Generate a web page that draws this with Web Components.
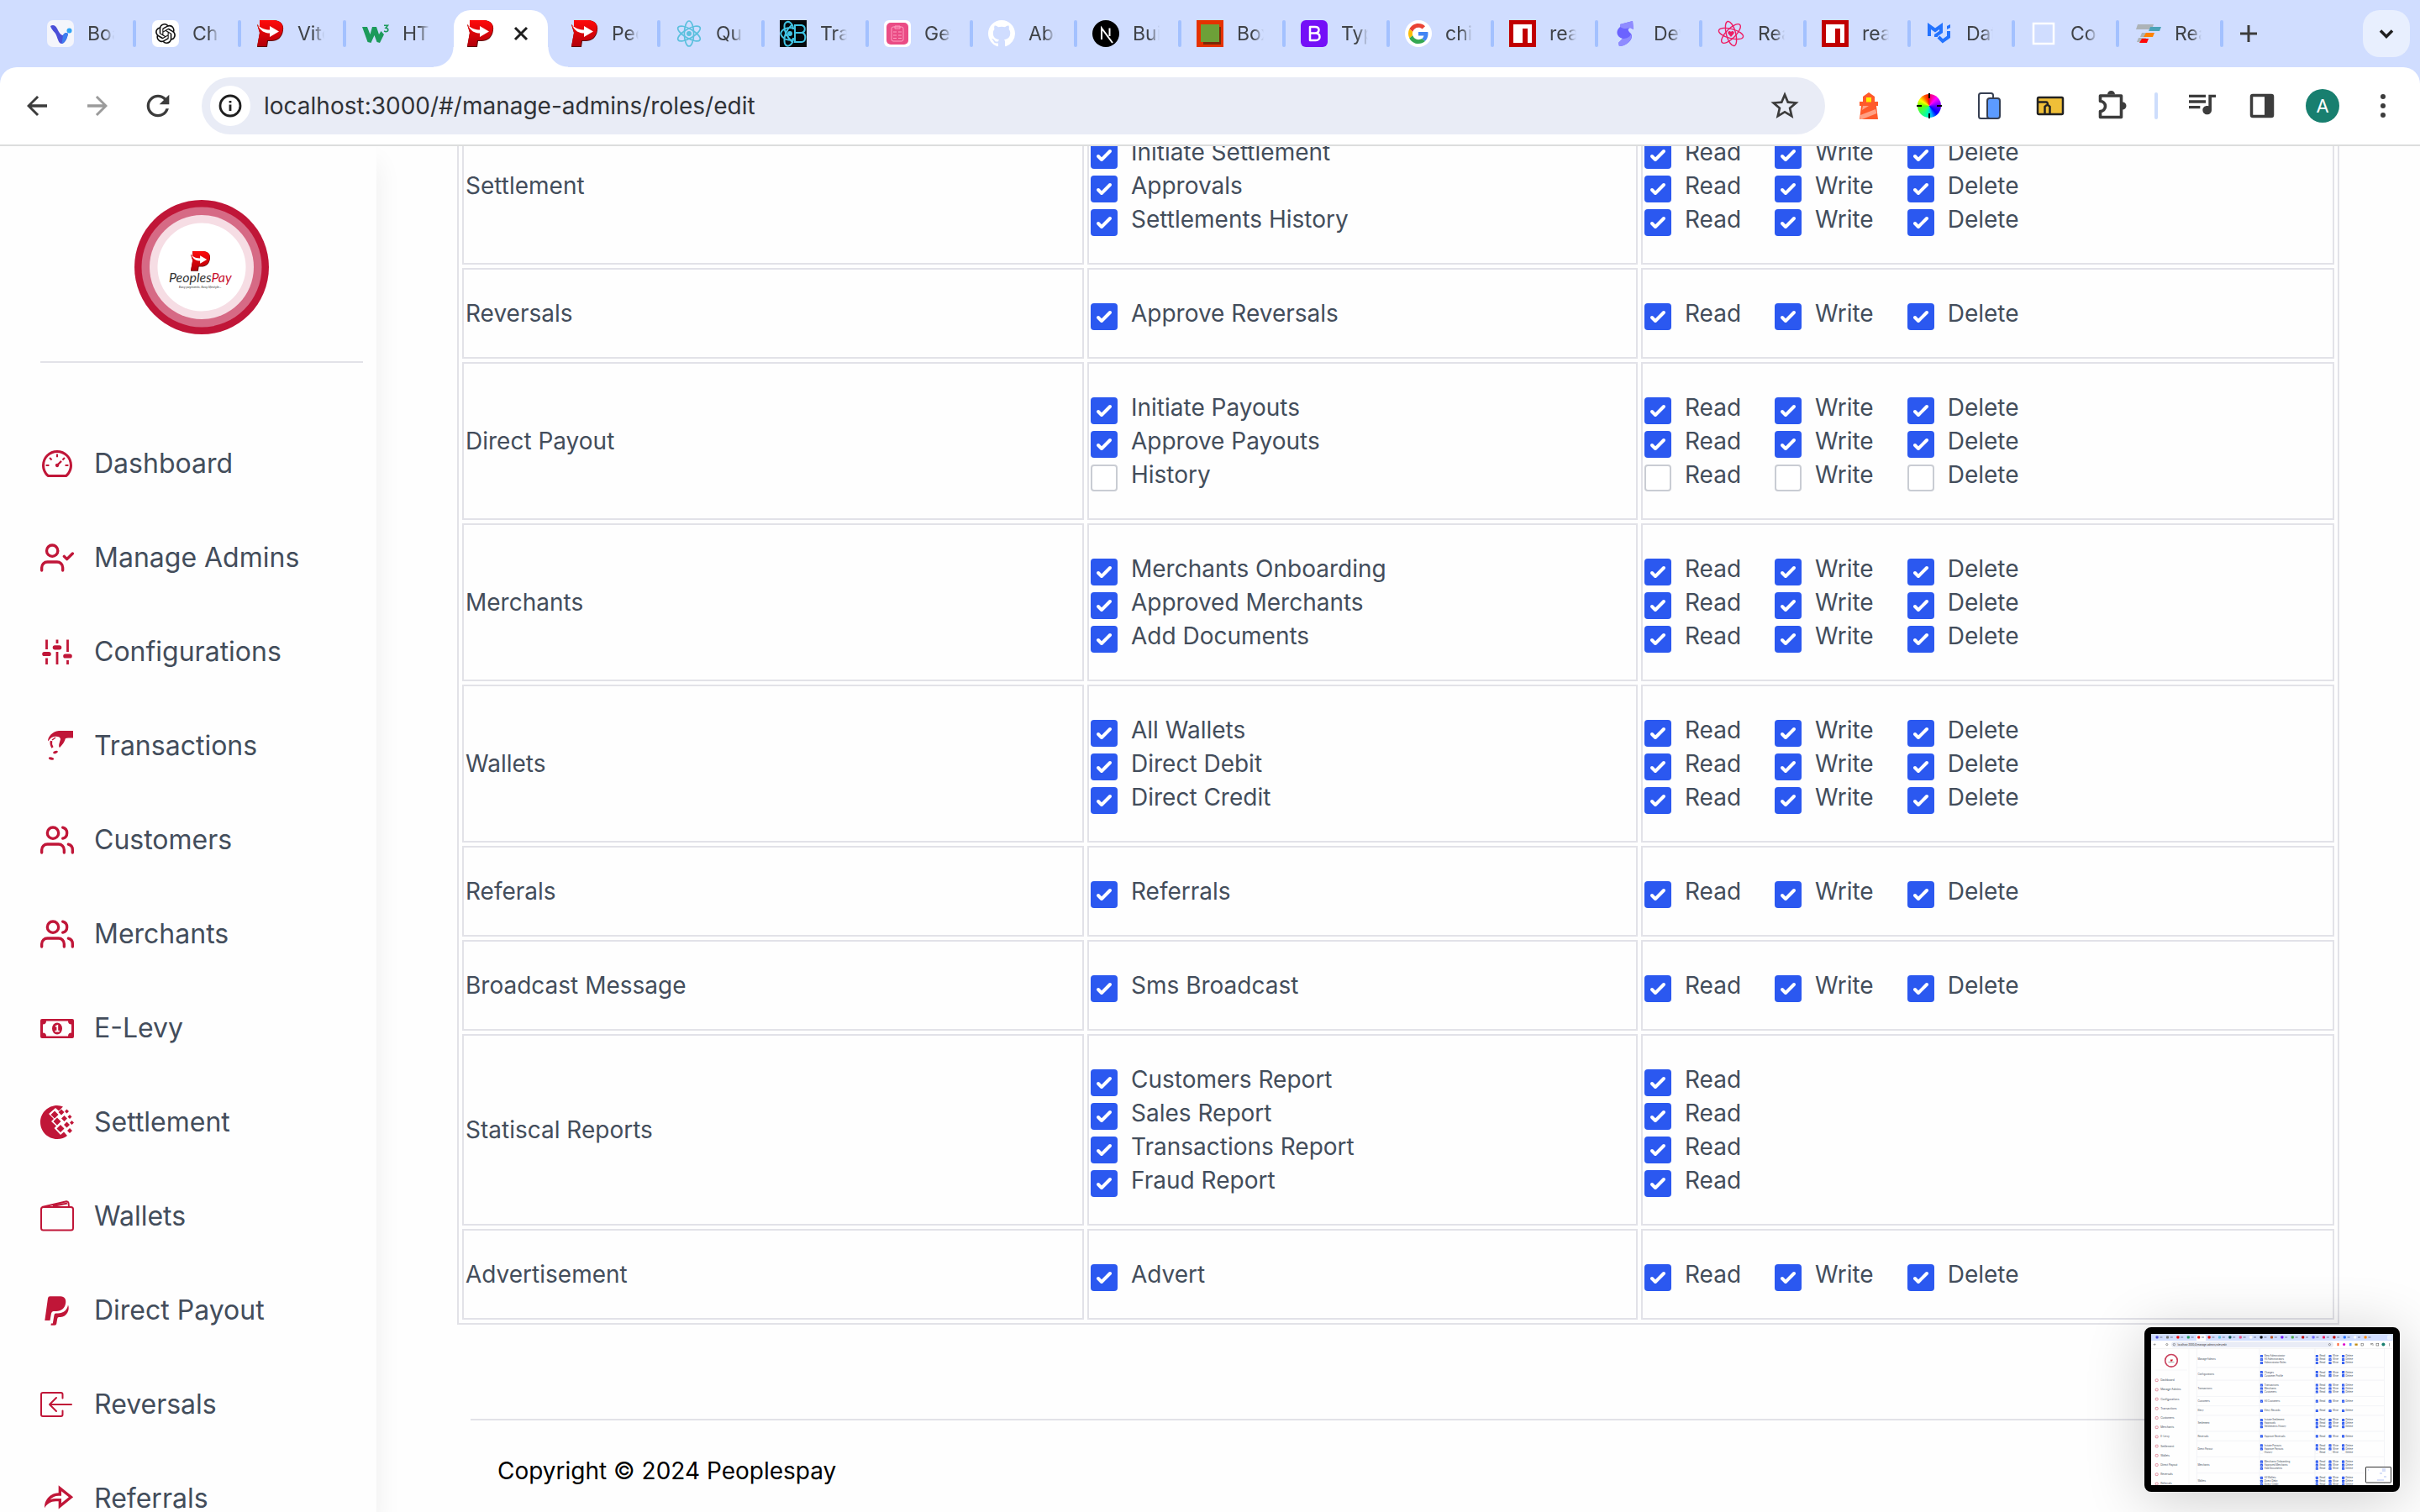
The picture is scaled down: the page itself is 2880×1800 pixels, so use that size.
<!DOCTYPE html>
<html lang="en">
<head>
<meta charset="utf-8">
<title>PeoplesPay Admin</title>
<style>
  html, body { margin: 0; height: 100%; }
  body { font-family: Inter, "Liberation Sans", sans-serif; font-size: 28px; line-height: 40px; color: #434d5b; background: #fefefe; overflow: hidden; }
</style>
</head>
<body>
<browser-window>
  <tab-strip slot="tabs">
    <browser-tab wide icon="vee">Board</browser-tab>
    <browser-tab wide icon="gpt">Chat</browser-tab>
    <browser-tab wide icon="pp">Vite</browser-tab>
    <browser-tab wide last icon="w3">HTML</browser-tab>
    <active-tab></active-tab>
    <browser-tab icon="pp">Peop</browser-tab>
    <browser-tab icon="react">Quick</browser-tab>
    <browser-tab icon="rbs">Trans</browser-tab>
    <browser-tab icon="clip">Getti</browser-tab>
    <browser-tab icon="github">Abou</browser-tab>
    <browser-tab icon="next">Build</browser-tab>
    <browser-tab icon="box">Box</browser-tab>
    <browser-tab icon="boot">Typo</browser-tab>
    <browser-tab icon="google">chip</browser-tab>
    <browser-tab icon="npm">react</browser-tab>
    <browser-tab icon="stripe">Dev</browser-tab>
    <browser-tab icon="rquery">React</browser-tab>
    <browser-tab icon="npm">react</browser-tab>
    <browser-tab icon="mui">Data</browser-tab>
    <browser-tab icon="blank">Code</browser-tab>
    <browser-tab icon="router">React</browser-tab>
  </tab-strip>
  <browser-toolbar slot="toolbar" url="localhost:3000/#/manage-admins/roles/edit"></browser-toolbar>
  <app-sidebar>
    <nav-item icon="dashboard">Dashboard</nav-item>
    <nav-item icon="usercheck">Manage Admins</nav-item>
    <nav-item icon="sliders">Configurations</nav-item>
    <nav-item icon="hand">Transactions</nav-item>
    <nav-item icon="users">Customers</nav-item>
    <nav-item icon="users">Merchants</nav-item>
    <nav-item icon="bill">E-Levy</nav-item>
    <nav-item icon="webmoney">Settlement</nav-item>
    <nav-item icon="wallet">Wallets</nav-item>
    <nav-item icon="paypal">Direct Payout</nav-item>
    <nav-item icon="reverse">Reversals</nav-item>
    <nav-item icon="share">Referrals</nav-item>
  </app-sidebar>
  <app-main>
    <permission-table></permission-table>
    <app-footer>Copyright © 2024 Peoplespay</app-footer>
  </app-main>
  <screen-preview slot="overlay"></screen-preview>
</browser-window>

<script>
const define = (name, build) => customElements.define(name, class extends HTMLElement {
  connectedCallback() {
    if (this.shadowRoot) return;
    this.attachShadow({ mode: 'open' }).innerHTML = build(this);
  }
});

const P = `<path d="M3 0H19C28 0 32 5 31 12C30 21 24 25 17 25H13L12 32H0L3 15L0 5L3 8Z" fill="#5a0a0a"/><path d="M3 0H19C28 0 31.500 5 30.500 11C29.500 20 24 24 17 24H12L11 31H0L3 15L0 5L3 8Z" fill="url(#pg)"/><path d="M1 6C5 10 10 11.500 15 11.500V7L26 13.500L15 20V15.500C9 15.500 4 13 1 6Z" fill="#fff"/><defs><linearGradient id="pg" x2="0" y2="1"><stop stop-color="#ff0a0a"/><stop offset="1" stop-color="#b3000a"/></linearGradient></defs>`;
const orbit = (c, w, mid) => `<g fill="none" stroke="${c}" stroke-width="${w}"><ellipse cx="16" cy="16" rx="15" ry="5.600"/><ellipse cx="16" cy="16" rx="15" ry="5.600" transform="rotate(60 16 16)"/><ellipse cx="16" cy="16" rx="15" ry="5.600" transform="rotate(120 16 16)"/></g>${mid}`;
const users = `<g fill="none" stroke="currentColor" stroke-width="2" stroke-linecap="round" stroke-linejoin="round">`;

/* Every icon: [viewBox, markup] */
const ICONS = {
  vee: ['0 0 32 32', `<rect width="32" height="32" rx="7" fill="#f4f5fb"/><path d="M4 7C7 5 10 6 12 10C14 14 16 18 19 18C20 16 22 14 25 16C24 22 21 28 17.500 28C14 28 13 23 11 18C9 13 6 13 4 7Z" fill="#4b4fd8"/><path d="M19 18C20 15 23 14 25 16C24 22 21 27 17.500 28Z" fill="#3d7ef0"/><circle cx="26.500" cy="12.500" r="3" fill="#2fa4f5"/>`],
  gpt: ['0 0 32 32', `<rect width="32" height="32" rx="7" fill="#fff"/><path transform="translate(4 4)" fill="#111" d="M22.2819 9.8211a5.9847 5.9847 0 0 0-.5157-4.9108 6.0462 6.0462 0 0 0-6.5098-2.9A6.0651 6.0651 0 0 0 4.9807 4.1818a5.9847 5.9847 0 0 0-3.9977 2.9 6.0462 6.0462 0 0 0 .7427 7.0966 5.98 5.98 0 0 0 .511 4.9107 6.051 6.051 0 0 0 6.5146 2.9001A5.9847 5.9847 0 0 0 13.2599 24a6.0557 6.0557 0 0 0 5.7718-4.2058 5.9894 5.9894 0 0 0 3.9977-2.9001 6.0557 6.0557 0 0 0-.7475-7.0729zm-9.022 12.6081a4.4755 4.4755 0 0 1-2.8764-1.0408l.1419-.0804 4.7783-2.7582a.7948.7948 0 0 0 .3927-.6813v-6.7369l2.02 1.1686a.071.071 0 0 1 .038.052v5.5826a4.504 4.504 0 0 1-4.4945 4.4944zm-9.6607-4.1254a4.4708 4.4708 0 0 1-.5346-3.0137l.142.0852 4.783 2.7582a.7712.7712 0 0 0 .7806 0l5.8428-3.3685v2.3324a.0804.0804 0 0 1-.0332.0615L9.74 19.9502a4.4992 4.4992 0 0 1-6.1408-1.6464zM2.3408 7.8956a4.485 4.485 0 0 1 2.3655-1.9728V11.6a.7664.7664 0 0 0 .3879.6765l5.8144 3.3543-2.0201 1.1685a.0757.0757 0 0 1-.071 0l-4.8303-2.7865A4.504 4.504 0 0 1 2.3408 7.872zm16.5963 3.8558L13.1038 8.364 15.1192 7.2a.0757.0757 0 0 1 .071 0l4.8303 2.7913a4.4944 4.4944 0 0 1-.6765 8.1042v-5.6772a.79.79 0 0 0-.407-.667zm2.0107-3.0231l-.142-.0852-4.7735-2.7818a.7759.7759 0 0 0-.7854 0L9.409 9.2297V6.8974a.0662.0662 0 0 1 .0284-.0615l4.8303-2.7866a4.4992 4.4992 0 0 1 6.6802 4.66zM8.3065 12.863l-2.02-1.1638a.0804.0804 0 0 1-.038-.0567V6.0742a4.4992 4.4992 0 0 1 7.3757-3.4537l-.142.0805L8.704 5.459a.7948.7948 0 0 0-.3927.6813zm1.0976-2.3654l2.602-1.4998 2.6069 1.4998v2.9994l-2.5974 1.4997-2.6067-1.4997Z"/>`],
  pp: ['0 0 32 32', P],
  w3: ['0 0 32 32', `<path d="M0 8H6L9.500 17L12 8H17L20 17L22.500 13L26 17L21 27L17.500 26L14.500 18L10.500 27L6.500 26Z" fill="#1c9a5b"/><path d="M26 6.200H30.500L28 9.200C32 9.500 31.500 14 28 13.800L26 13" fill="none" stroke="#1c9a5b" stroke-width="1.600"/>`],
  react: ['0 0 32 32', orbit('#5cc0de', 1.7, '<circle cx="16" cy="16" r="3" fill="#5cc0de"/>').replace('<g ', '<g transform="rotate(90 16 16)" ')],
  rbs: ['0 0 32 32', `<rect width="32" height="32" fill="#04090c"/><g fill="none" stroke="#41c4e4" stroke-width="2"><path d="M18 6H26C31 7 31 14 26 15H18ZM18 15H27C32 17 31 26 26 26H18Z"/><path d="M1 16C3 9 12 8 17 10M1 16C3 23 12 25 17 23M6 4C10 -1 16 4 16 11M6 28C9 34 16 29 16 21M6 4C4 11 8 20 16 27M6 28C4 20 8 11 14 6"/></g><circle cx="12" cy="16" r="3" fill="#41c4e4"/>`],
  clip: ['0 0 32 32', `<rect width="32" height="32" rx="6" fill="#fff"/><rect x="3" y="3" width="26" height="26" rx="5" fill="#ea4c85"/><g fill="none" stroke="#ff9dc0" stroke-width="1"><rect x="9" y="8" width="14" height="17" rx="2"/><path d="M13 7H19V10H13ZM11 14H15M17 14H21M11 18H15M17 18H21M11 21.500H15M17 21.500H21"/></g>`],
  github: ['0 0 16 16', `<path fill="#fff" d="M8 0C3.580 0 0 3.580 0 8c0 3.540 2.290 6.530 5.470 7.590.4.070.55-.17.55-.38 0-.19-.01-.82-.01-1.490-2.010.37-2.530-.49-2.690-.94-.09-.23-.48-.94-.82-1.130-.28-.15-.68-.52-.01-.53.63-.01 1.080.58 1.230.82.72 1.210 1.870.87 2.330.66.07-.52.28-.87.51-1.070-1.780-.2-3.640-.89-3.640-3.950 0-.87.31-1.590.82-2.150-.08-.2-.36-1.020.08-2.120 0 0 .67-.21 2.200.82.64-.18 1.320-.27 2-.27s1.360.09 2 .27c1.530-1.040 2.200-.82 2.200-.82.44 1.100.16 1.920.08 2.120.51.56.82 1.270.82 2.150 0 3.070-1.870 3.750-3.650 3.950.29.25.54.73.54 1.480 0 1.070-.01 1.930-.01 2.200 0 .21.15.46.55.38A8.010 8.010 0 0 0 16 8c0-4.420-3.580-8-8-8z"/>`],
  next: ['0 0 32 32', `<circle cx="16" cy="16" r="16" fill="#000"/><path d="M11 23V9.500L24 27M20.500 9.500V19" fill="none" stroke="#fff" stroke-width="2"/>`],
  box: ['0 0 32 32', `<rect width="32" height="32" fill="#e53200"/><path d="M8 8H29V29H8Z" fill="#7a2a08"/><rect x="5" y="5" width="22" height="21" fill="#6da038"/>`],
  boot: ['0 0 32 32', `<rect width="32" height="32" rx="6" fill="#7410f7"/><path d="M11 8H17C23 8 23 15 17 15.500H11ZM11 15.500H18C24 16 24 24 18 24H11Z" fill="none" stroke="#fff" stroke-width="2.500" stroke-linejoin="round"/>`],
  google: ['-8 -8 64 64', `<circle cx="24" cy="24" r="32" fill="#fff"/><path fill="#EA4335" d="M24 9.500c3.540 0 6.710 1.220 9.210 3.600l6.850-6.850C35.900 2.380 30.470 0 24 0 14.620 0 6.510 5.380 2.560 13.220l7.980 6.190C12.430 13.720 17.740 9.500 24 9.500z"/><path fill="#4285F4" d="M46.980 24.550c0-1.570-.15-3.090-.38-4.550H24v9.020h12.940c-.58 2.960-2.260 5.480-4.780 7.180l7.730 6c4.510-4.180 7.090-10.360 7.090-17.650z"/><path fill="#FBBC05" d="M10.530 28.590c-.48-1.450-.76-2.990-.76-4.590s.27-3.140.76-4.590l-7.980-6.190C.92 16.460 0 20.120 0 24c0 3.880.92 7.540 2.560 10.780l7.970-6.190z"/><path fill="#34A853" d="M24 48c6.480 0 11.930-2.130 15.890-5.810l-7.730-6c-2.150 1.450-4.920 2.300-8.160 2.300-6.260 0-11.570-4.220-13.470-9.910l-7.980 6.190C6.510 42.620 14.620 48 24 48z"/>`],
  npm: ['0 0 32 32', `<rect width="32" height="32" fill="#c10000"/><path d="M5 5H27V27H22V10H16V27H5Z" fill="#fff"/>`],
  stripe: ['0 0 32 32', `<path d="M8 5L23 1L24 11L20 9C16 11 18 13 21 16C25 22 16 31 7 31L6 27L11 22C4 20 2 13 8 8Z" fill="#6c63ff"/><path d="M8 5L23 1L24 11L20 9C15 11 11 10 8 8ZM6 27L11 22C15 22 19 21 21 17C24 23 15 31 7 31Z" fill="#8f8bff"/>`],
  rquery: ['0 0 32 32', orbit('#ee1d63', 1.4, '<path d="M16 20L12.500 16A2 2 0 0 1 16 14A2 2 0 0 1 19.500 16Z" fill="#ee1d63"/>').replace('<g ', '<g transform="rotate(15 16 16)" ')],
  mui: ['0 0 32 32', `<path d="M4 19V7L11 12L18 7V14L12 18V20" fill="none" stroke="#2373ff" stroke-width="4"/><path d="M15 20L20 25L27 20V13" fill="none" stroke="#2373ff" stroke-width="4"/><path d="M25 7L29 5V9L25 11Z" fill="#2373ff"/>`],
  blank: ['0 0 32 32', `<rect x="4" y="4" width="24" height="24" fill="none" stroke="#fff" stroke-width="2.500"/>`],
  router: ['0 0 32 32', `<path d="M4 5H23L21 11H2Z" fill="#adb3b7"/><path d="M19 8H32L30 13H17Z" fill="#4ba3b8"/><path d="M9 15H17L15 20H7Z" fill="#adb3b7"/><path d="M14 15H24L22 20H11Z" fill="#ff8200"/><path d="M5 21H14L12 26H3Z" fill="#adb3b7"/><path d="M9 22H17L15 27H6Z" fill="#ff0808"/>`],
  close: ['0 0 32 32', `<path d="M9 9L23 23M23 9L9 23" stroke="#1f1f1f" stroke-width="3"/>`],
  plus: ['0 0 20 20', `<path d="M10 0V20M0 10H20" stroke="#3c3c3c" stroke-width="3"/>`],
  chevron: ['0 0 24 24', `<path d="M5 8.500L12 15.500L19 8.500" fill="none" stroke="#1f1f1f" stroke-width="3.500"/>`],
  back: ['0 0 24 24', `<path fill="#3c3c3c" d="M20 10.800H7.830l5.590-5.390L12 4l-8 8 8 8 1.410-1.410L7.830 13.200H20z"/>`],
  forward: ['0 0 24 24', `<path fill="#9b9b9b" d="M4 10.800H16.170l-5.590-5.390L12 4l8 8-8 8-1.410-1.410L16.170 13.200H4z"/>`],
  reload: ['0 0 24 24', `<path fill="#3c3c3c" d="M17.650 6.350A7.958 7.958 0 0 0 12 4c-4.420 0-7.990 3.580-7.990 8s3.570 8 7.990 8c3.730 0 6.840-2.550 7.730-6h-2.080A5.990 5.990 0 0 1 12 18c-3.310 0-6-2.690-6-6s2.690-6 6-6c1.660 0 3.140.69 4.220 1.780L13 11h7V4l-2.350 2.350z"/>`],
  info: ['0 0 28 28', `<circle cx="14" cy="14" r="12" fill="none" stroke="#1f1f1f" stroke-width="2.800"/><path d="M14 12.500V20M14 8V10.500" stroke="#1f1f1f" stroke-width="2.800"/>`],
  star: ['0 0 24 24', `<path fill="#3c3c3c" d="M22 9.240l-7.190-.62L12 2 9.190 8.630 2 9.240l5.460 4.730L5.820 21 12 17.270 18.180 21l-1.630-7.030L22 9.240zM12 15.400l-3.760 2.270 1-4.280-3.320-2.880 4.380-.38L12 6.100l1.710 4.040 4.380.38-3.320 2.880 1 4.280L12 15.400z"/>`],
  lighthouse: ['0 0 40 40', `<path d="M20 4L27 9V15H31V20H29L31 36H9L11 20H9V15H13V9Z" fill="#ff5a2b"/><rect x="17" y="10" width="6" height="5.500" fill="#fff000"/><path d="M13 20H20L12 25ZM10 31L28 24L29.500 29L12 36H9.500Z" fill="#ffa184"/>`],
  devices: ['0 0 40 40', `<rect x="7" y="5" width="17" height="30" rx="2.500" fill="#fff" stroke="#363f52" stroke-width="2"/><rect x="17" y="11" width="15" height="24" rx="3" fill="#5c9bff" stroke="#363f52" stroke-width="2"/>`],
  folder: ['0 0 40 40', `<rect x="5" y="10" width="30" height="20" rx="1.500" fill="#f0bf38" stroke="#222" stroke-width="2.500"/><path d="M6 15.500H15Q17 15.500 17 19M13.500 30V21Q16.500 17 19.500 21V30" fill="none" stroke="#222" stroke-width="2.500"/>`],
  puzzle: ['0 0 40 40', `<path d="M16 6.500a4.500 4.500 0 0 1 9 0zM34 15.500a4.500 4.500 0 0 1 0 9z" fill="#3c3c3c"/><path d="M7.500 8H32.500V33.500H7.500V26.500a5 5 0 0 0 0-12Z" fill="none" stroke="#3c3c3c" stroke-width="3.600" stroke-linejoin="round"/>`],
  music: ['0 2 24 24', `<path fill="#3c3c3c" d="M15 6H3v2h12V6zm0 4H3v2h12v-2zM3 16h8v-2H3v2zM17 6v8.180c-.31-.11-.65-.18-1-.18-1.900 0-3.200 1.340-3.200 3s1.340 3.200 3.200 3.200 3.200-1.340 3.200-3.200V8h3V6h-5z"/>`],
  panel: ['0 0 40 40', `<rect x="7.500" y="7.500" width="25" height="25" rx="1.500" fill="#fff" stroke="#3c3c3c" stroke-width="3.500"/><path d="M23 7H33V33H23Z" fill="#3c3c3c"/>`],
  dots: ['0 0 40 40', `<g fill="#3c3c3c"><circle cx="20" cy="9" r="3"/><circle cx="20" cy="20" r="3"/><circle cx="20" cy="31" r="3"/></g>`],
  dashboard: ['14 14 996 996', `<path fill="currentColor" fill-rule="evenodd" d="M924.800 385.600a446.700 446.700 0 0 0-96-142.400 446.700 446.700 0 0 0-142.400-96C631.100 123.800 572.500 112 512 112s-119.100 11.800-174.400 35.200a446.700 446.700 0 0 0-142.400 96 446.700 446.700 0 0 0-96 142.400C75.800 440.900 64 499.500 64 560c0 132.700 58.300 257.700 159.900 343.100l1.700 1.400c5.800 4.800 13.100 7.500 20.600 7.500h531.700c7.500 0 14.800-2.700 20.600-7.500l1.700-1.400C901.700 817.700 960 692.700 960 560c0-60.500-11.900-119.100-35.200-174.400zM761.400 836H262.600A371.120 371.120 0 0 1 140 560c0-99.400 38.700-192.800 109-263 70.300-70.300 163.700-109 263-109 99.400 0 192.800 38.700 263 109 70.300 70.300 109 163.700 109 263 0 105.600-44.500 205.500-122.600 276z"/><path fill="currentColor" d="M623.500 421.500a8.030 8.030 0 0 0-11.300 0L527.700 506c-18.700-5-39.400-.2-54.100 14.500a55.950 55.950 0 0 0 0 79.200 55.950 55.950 0 0 0 79.200 0 55.870 55.870 0 0 0 14.500-54.100l84.500-84.500c3.100-3.100 3.100-8.200 0-11.300z"/><path d="M512 224V320M178 560H274M750 560H846M289 337L352 400M735 337L672 400" stroke="currentColor" stroke-width="52"/>`],
  usercheck: ['0 0 24 24', users + `<path d="M16 21v-2a4 4 0 0 0-4-4H5a4 4 0 0 0-4 4v2"/><circle cx="8.500" cy="7" r="4"/><path d="M17 11l2 2 4-4"/></g>`],
  users: ['0 0 24 24', users + `<path d="M17 21v-2a4 4 0 0 0-4-4H5a4 4 0 0 0-4 4v2"/><circle cx="9" cy="7" r="4"/><path d="M23 21v-2a4 4 0 0 0-3-3.870M16 3.130a4 4 0 0 1 0 7.750"/></g>`],
  sliders: ['0 0 40 40', `<path d="M7.500 5.500V17M7.500 27.500V35M20 5.500V10M20 20V35M32.500 5.500V20M32.500 30V35" stroke="currentColor" stroke-width="2.800"/><path d="M4.800 22.500H10.200M17.300 14.800H22.700M29.800 25H35.200" stroke="currentColor" stroke-width="5.200" stroke-linecap="round"/>`],
  hand: ['0 0 40 40', `<path fill="currentColor" d="M22 2H39V10.500H33L30 11C29 15 26 19 23 22C21 20 23 16 24 12C24 9 20 8 16 9C12 10 11 13 9 14.500C9 9 14 3 22 2Z"/><g fill="none" stroke="currentColor" stroke-width="2.500"><path d="M13 14Q12 18 14.500 22"/><path d="M14 13L18 10" stroke-width="1.500"/></g><ellipse cx="18" cy="27.500" rx="3" ry="1.500" transform="rotate(-20 18 27.500)" fill="currentColor"/><ellipse cx="13" cy="35" rx="3.200" ry="1.600" transform="rotate(15 13 35)" fill="currentColor"/>`],
  bill: ['0 0 40 40', `<path fill="currentColor" fill-rule="evenodd" d="M2 9H38A2 2 0 0 1 40 11V30A2 2 0 0 1 38 32H2A2 2 0 0 1 0 30V11A2 2 0 0 1 2 9ZM7 11.500A4 4 0 0 1 3 15.500V25.500A4 4 0 0 1 7 29.500H33A4 4 0 0 1 37 25.500V15.500A4 4 0 0 1 33 11.500Z"/><ellipse cx="20" cy="20.500" rx="6" ry="7" fill="currentColor"/><path d="M18 18L20.300 17V23.500M17.500 23.700H22.700" fill="none" stroke="#fff" stroke-width="1.800"/>`],
  webmoney: ['0 0 40 40', `<path fill="currentColor" d="M20 0C9 0 0 9 0 20S9 40 20 40C25 40 29 38.500 32 36L28 31.500L24 35L16.500 27L19 24.500L13 19L16 16L10 10L18 3L22 6.500L27 1.500Q24 0 20 0Z"/><g fill="currentColor"><path d="M17 6.500l4.500 4.500-4.500 4.500-4.500-4.500zM20 14.500l4.500 4.500-4.500 4.500-4.500-4.500zM24 23l4.500 4.500-4.500 4.500-4.500-4.500zM25 4.500l3.500 3.500-3.500 3.500-3.500-3.500zM28.500 12l3.500 3.500-3.500 3.500-3.500-3.500zM31.500 19.500l3.500 3.500-3.500 3.500-3.500-3.500zM31.500 4.500l2.500 2.500-2.500 2.500-2.500-2.500zM35 11l2.500 2.500-2.500 2.500-2.500-2.500zM37.500 18l2.500 2.500-2.500 2.500-2.500-2.500zM35 27l3 3-3 3-3-3z"/></g>`],
  wallet: ['0 0 40 40', `<g fill="none" stroke="currentColor" stroke-width="2" stroke-linejoin="round"><rect x="1" y="9" width="38" height="27.500" rx="2.500"/><path d="M2 9L31 2.200Q33 2 33.500 4L34 9M15 8L32 4.500"/></g>`],
  paypal: ['0 0 40 40', `<path fill="currentColor" d="M11.500 3.300H24C29 3.300 31 7 30 12C29 17.500 25 21 19 21H15.500Q13.500 21 13 23.500L11.500 32H5.300L9 5.500Q9.300 3.300 11.500 3.300Z"/><path fill="currentColor" d="M33 13.500C35.500 19 31.500 28 24 28H22Q20.500 28 20.200 30L19.200 36Q19 37.700 17 37.700H12.500L12.800 35.500H14.800L16.500 25.500Q16.700 23.500 18.500 23.500H21C27 23.500 32 20 33 13.500Z"/>`],
  reverse: ['0 0 40 40', `<g fill="none" stroke="currentColor" stroke-width="2" stroke-linecap="round" stroke-linejoin="round"><path d="M26.500 12.500V8a2 2 0 0 0-2-2H3a2 2 0 0 0-2 2V32a2 2 0 0 0 2 2H24.500a2 2 0 0 0 2-2V27.500M37 20H11M19 12L11 20L19 28"/></g>`],
  share: ['0 0 24 24', `<path fill="currentColor" d="M13 14H11C7.540 14 4.530 15.950 3.030 18.810 3.010 18.540 3 18.270 3 18 3 12.480 7.480 8 13 8V2.500L23.500 11 13 19.500V14ZM11 12H15V15.310L20.320 11 15 6.690V10H13C10.580 10 8.410 11.080 6.940 12.780 8.200 12.280 9.580 12 11 12Z"/>`]
};

define('ui-icon', el => {
  const [box, body] = ICONS[el.getAttribute('name')];
  return `<style>:host{display:block;flex:none;width:var(--size,40px);height:var(--size,40px)}svg{display:block;width:100%;height:100%}</style><svg viewBox="${box}" aria-hidden="true">${body}</svg>`;
});

define('browser-window', () => `<style>
  :host{display:grid;grid-template-rows:auto auto 1fr;height:100vh;overflow:hidden}
  .page{display:flex;min-height:0;overflow:hidden}
</style><slot name="tabs"></slot><slot name="toolbar"></slot><div class="page"><slot></slot></div><slot name="overlay"></slot>`);

define('tab-strip', () => `<style>
  :host{display:flex;align-items:center;height:80px;padding-left:56px;padding-right:12px;background:#d0ddff}
  button{border:0;padding:0;background:none;display:grid;place-items:center;flex:none}
  .add{--size:20px;margin-left:2px}
  .list{--size:24px;margin-left:auto;width:56px;height:56px;border-radius:20px;background:#e8effe}
</style><slot></slot><button class="add" aria-label="New tab"><ui-icon name="plus"></ui-icon></button><button class="list" aria-label="Search tabs"><ui-icon name="chevron"></ui-icon></button>`);

define('browser-tab', el => `<style>
  :host{display:flex;align-items:center;flex:none;width:124px;--size:32px;font-size:23px;line-height:32px;color:#3f4247}
  :host([wide]){width:125px}
  :host([last])::after{visibility:hidden}
  :host::after{content:"";width:4px;height:32px;border-radius:2px;background:#a3c1ff;margin-left:22px}
  span{margin-left:16px;width:32px;overflow:hidden;white-space:nowrap;-webkit-mask-image:linear-gradient(90deg,#000 60%,transparent);mask-image:linear-gradient(90deg,#000 60%,transparent)}
</style><ui-icon name="${el.getAttribute('icon')}"></ui-icon><span><slot></slot></span>`);

define('active-tab', () => `<style>
  :host{position:relative;display:flex;align-items:center;align-self:stretch;flex:none;box-sizing:border-box;width:112px;margin:12px 28px 0 -16px;padding:0 16px 12px;justify-content:space-between;background:#fff;border-radius:20px 20px 0 0;--size:32px}
  :host::before,:host::after{content:"";position:absolute;bottom:0;width:24px;height:24px}
  :host::before{right:100%;background:radial-gradient(circle at 0 0,transparent 23px,#fff 24px)}
  :host::after{left:100%;background:radial-gradient(circle at 100% 0,transparent 23px,#fff 24px)}
  button{border:0;padding:0;background:none}
</style><ui-icon name="pp"></ui-icon><button aria-label="Close tab"><ui-icon name="close"></ui-icon></button>`);

define('browser-toolbar', el => `<style>
  :host{display:block;background:#d0ddff}
  .bar{display:flex;align-items:center;gap:32px;height:92px;padding:0 24px;background:#fff;border-radius:20px 20px 0 0;border-bottom:2px solid #dcdddd}
  button{border:0;padding:0;background:none;width:40px;height:40px;display:grid;place-items:center;flex:none}
  .nav{--size:36px}
  form{flex:1;display:flex;align-items:center;gap:16px;box-sizing:border-box;height:68px;padding:0 28px 0 10px;border-radius:34px;background:#e9ecf6}
  .site{width:48px;height:48px;border-radius:24px;background:#fff;--size:28px}
  input{flex:1;min-width:0;border:0;padding:0;background:none;font:inherit;color:#303236;outline:0}
  hr{width:4px;height:32px;margin:0;border:0;border-radius:2px;background:#cdddfc}
  .wheel{width:28px;height:28px;border-radius:14px;background:conic-gradient(#f0005c,#f0f 12%,#60f 25%,#00f 38%,#0af 46%,#0fa 54%,#3f6 63%,#6f0 75%,#ff0 84%,#f60 92%,#f00);position:relative}
  .wheel::before,.wheel::after{content:"";position:absolute;inset:-1px 13px;background:linear-gradient(#000 6px,transparent 6px 24px,#000 24px)}
  .wheel::after{inset:13px -1px;background:linear-gradient(90deg,#000 6px,transparent 6px 24px,#000 24px)}
  .me{border-radius:20px;background:#187f6f;color:#fff;font:22px/40px Inter,sans-serif}
</style><div class="bar">
  <button class="nav" aria-label="Back"><ui-icon name="back"></ui-icon></button>
  <button class="nav" aria-label="Forward"><ui-icon name="forward"></ui-icon></button>
  <button aria-label="Reload"><ui-icon name="reload"></ui-icon></button>
  <form><button type="button" class="site" aria-label="Site information"><ui-icon name="info"></ui-icon></button>
  <input aria-label="Address" value="${el.getAttribute('url')}">
  <button type="button" aria-label="Bookmark"><ui-icon name="star"></ui-icon></button></form>
  <button aria-label="Lighthouse"><ui-icon name="lighthouse"></ui-icon></button>
  <button aria-label="Colour picker"><span class="wheel"></span></button>
  <button aria-label="Mobile simulator"><ui-icon name="devices"></ui-icon></button>
  <button aria-label="Responsive viewer"><ui-icon name="folder"></ui-icon></button>
  <button aria-label="Extensions"><ui-icon name="puzzle"></ui-icon></button>
  <hr>
  <button aria-label="Media"><ui-icon name="music"></ui-icon></button>
  <button aria-label="Side panel"><ui-icon name="panel"></ui-icon></button>
  <button class="me" aria-label="Profile">A</button>
  <button aria-label="Menu"><ui-icon name="dots"></ui-icon></button>
</div>`);

define('brand-logo', () => `<style>:host{display:block;width:160px;height:160px}svg{display:block}</style>
<svg width="160" height="160" viewBox="0 0 160 160" font-family="Lato, sans-serif" font-style="italic">
  <circle cx="80" cy="80" r="80" fill="#c01638"/><circle cx="80" cy="80" r="71.500" fill="#d66a85"/><circle cx="80" cy="80" r="62" fill="#f6dde4"/><circle cx="80" cy="80" r="52.500" fill="#fff"/>
  <g transform="translate(67 61) scale(.74)">${P}</g>
  <text x="41" y="98" font-size="16" fill="#333">Peoples<tspan fill="#c8102e">Pay</tspan></text>
  <text x="53" y="105" font-size="4" fill="#333">Easy payments, Easy lifestyle...</text>
</svg>`);

define('app-sidebar', () => `<style>
  :host{display:block;position:relative;z-index:1;flex:none;box-sizing:border-box;width:448px;padding:64px 16px 0 48px;background:#fefefe;box-shadow:0 20px 30px rgba(0,0,0,.07)}
  brand-logo{margin:0 auto}
  hr{border:0;height:2px;margin:32px 0 64px;background:#e2e2e8}
  nav{display:flex;flex-direction:column}
</style><brand-logo></brand-logo><hr><nav><slot></slot></nav>`);

define('nav-item', el => `<style>
  :host{display:block}
  a{display:flex;align-items:center;gap:24px;height:112px;font-size:32px;color:#434d5b;text-decoration:none}
  ui-icon{color:#c01638}
</style><a href="#"><ui-icon name="${el.getAttribute('icon')}"></ui-icon><slot></slot></a>`);

define('app-main', () => `<style>
  :host{flex:1;min-width:0;min-height:0;display:flex;flex-direction:column;justify-content:flex-end;padding:0 96px;overflow:hidden}
</style><slot></slot>`);

define('app-footer', () => `<style>
  :host{display:block;flex:none;margin:112px 16px 0;padding:40px 32px 29px;border-top:2px solid #e2e2e8;color:#000}
</style><footer><slot></slot></footer>`);

define('check-item', el => `<style>
  :host{display:block}
  label{display:flex;align-items:flex-end;gap:16px;height:40px}
  input{appearance:none;flex:none;box-sizing:border-box;width:32px;height:32px;margin:0;border:2px solid #c9ccd3;border-radius:4px;background:#fff}
  input:checked{border:0;background:#2b58f0 url("data:image/svg+xml,%3Csvg viewBox='0 0 16 16' fill='white' xmlns='http://www.w3.org/2000/svg'%3E%3Cpath d='M12.207 4.793a1 1 0 0 1 0 1.414l-5 5a1 1 0 0 1-1.414 0l-2-2a1 1 0 0 1 1.414-1.414L6.500 9.086l4.293-4.293a1 1 0 0 1 1.414 0z'/%3E%3C/svg%3E") center/100% no-repeat}
</style><label><input type="checkbox"${el.hasAttribute('checked') ? ' checked' : ''}><span><slot></slot></span></label>`);

const ROWS = [
  ['Settlement', ['Initiate Settlement', 'Approvals', 'Settlements History']],
  ['Reversals', ['Approve Reversals']],
  ['Direct Payout', ['Initiate Payouts', 'Approve Payouts', '-History']],
  ['Merchants', ['Merchants Onboarding', 'Approved Merchants', 'Add Documents']],
  ['Wallets', ['All Wallets', 'Direct Debit', 'Direct Credit']],
  ['Referals', ['Referrals']],
  ['Broadcast Message', ['Sms Broadcast']],
  ['Statiscal Reports', ['Customers Report', 'Sales Report', 'Transactions Report', 'Fraud Report'], ['Read']],
  ['Advertisement', ['Advert']]
];

define('permission-table', () => {
  const item = (text, on) => `<check-item${on ? ' checked' : ''}>${text}</check-item>`;
  const body = ROWS.map(([name, pages, acts = ['Read', 'Write', 'Delete']]) => `<tr><td>${name}</td><td>${pages.map(p => item(p.replace('-', ''), p[0] !== '-')).join('')}</td><td>${pages.map(p => `<div>${acts.map(a => item(a, p[0] !== '-')).join('')}</div>`).join('')}</td></tr>`).join('');
  return `<style>
  :host{display:block;flex:none}
  table{width:100%;table-layout:fixed;border:2px solid #e2e2e8;border-spacing:4px}
  td{box-sizing:border-box;padding:32px 2px;border:2px solid #e2e2e8;vertical-align:middle}
  .name{width:740px}.page{width:655px}
  div{display:flex;gap:40px}
</style><table><colgroup><col class="name"><col class="page"><col></colgroup><tbody>${body}</tbody></table>`;
});

/* Floating thumbnail of the previous capture, drawn at a tenth of its size */
define('screen-preview', () => {
  const nav = ['Dashboard', 'Manage Admins', 'Configurations', 'Transactions', 'Customers', 'Merchants', 'E-Levy', 'Settlement', 'Wallets', 'Direct Payout', 'Reversals', 'Referrals'];
  const rows = [
    [30.3, 'Manage Admins', ['New Administrator', 'All Administrators', 'Administrator Roles']],
    [47.5, 'Configurations', ['Charges', 'Customer Profile']],
    [64.8, 'Transactions', ['Transactions', 'Merchants', 'Customers']],
    [80, 'Customers', ['All Customers']],
    [91.3, 'Elevy', ['Elevy Records']],
    [106.4, 'Settlement', ['Initiate Settlement', 'Approvals', 'Settlements History']],
    [121.6, 'Reversals', ['Approve Reversals']],
    [136.7, 'Direct Payout', ['Initiate Payouts', 'Approve Payouts', '-History']],
    [156, 'Merchants', ['Merchants Onboarding', 'Approved Merchants', 'Add Documents']],
    [175.2, 'Wallets', ['All Wallets', 'Direct Debit', 'Direct Credit']]
  ];
  const box = (x, y, on) => `<rect x="${x - 1.6}" y="${y - 1.4}" width="3.200" height="3.200" rx=".4" fill="${on ? '#2b58f0' : '#fff'}" ${on ? '' : 'stroke="#e2e5ea" stroke-width=".3"'}/>${on ? `<path d="M${x - .7} ${y + .3}l.5.5 1-1" stroke="#fff" stroke-width=".4" fill="none"/>` : ''}`;
  const t = (x, y, s) => `<text x="${x}" y="${y + 1}">${s}</text>`;
  const body = rows.map(([y, name, pages]) => t(55.4, y, name) + pages.map((p, i) => {
    const py = y + (i - (pages.length - 1) / 2) * 4, on = p[0] !== '-';
    return box(131.4, py, on) + t(134.8, py, p.replace('-', '')) + box(197.3, py, on) + t(200.6, py, 'Read') + box(213, py, on) + t(216, py, 'Write') + box(228.6, py, on) + t(231.6, py, 'Delete');
  }).join('') + `<path d="M54.500 ${y + pages.length * 2 + 3.6}H277" stroke="#eeeff3" stroke-width=".7"/>`).join('');
  const favs = ['#4b4fd8', '#777', '#e00', '#1c9a5b', '#e00', '#e00', '#5cc0de', '#155', '#ea4c85', '#fff', '#000', '#b52', '#7410f7', '#4a4', '#c10000', '#6c63ff', '#ee1d63', '#c10000', '#2373ff', '#fff', '#f80'];
  const tabs = favs.map((c, i) => `<rect x="${5.6 + i * 12.4}" y="2.500" width="3" height="3" rx=".8" fill="${c}"/><rect x="${10.4 + i * 12.4}" y="3.200" width="3" height="1.600" fill="#6d7690" opacity=".6"/>`).join('');
  return `<style>
  :host{position:fixed;right:24px;bottom:24px;z-index:2;box-sizing:border-box;width:304px;height:196px;border:8px solid #000;border-radius:8px;background:#fff;box-shadow:0 8px 70px rgba(0,0,0,.2)}
  svg{display:block;width:288px;height:180px}
</style><svg viewBox="0 0 288 180" font-family="Inter, sans-serif" font-size="2.800" fill="#434d5b">
  <rect width="288" height="180" fill="#fefefe"/>${body}
  <path d="M54.500 17V180M129 17V180M195 17V180M277.500 17V180" stroke="#eeeff3" stroke-width=".7"/>
  <rect y="17" width="44.800" height="163" fill="#fefefe"/><path d="M45 17V180" stroke="#f6f6f6"/>
  <circle cx="24" cy="31.800" r="7.300" fill="#fff" stroke="#c9405c" stroke-width="1.600"/><path d="M23 30.500h3l-1 2h-2z" fill="#d01020"/><path d="M20.500 33.500h7" stroke="#666" stroke-width=".6"/>
  <path d="M5 43H43" stroke="#ececf0" stroke-width=".5"/>
  <g font-size="3.200">${nav.map((n, i) => t(11.2, 55.2 + i * 11.2, n) + `<rect x="5.200" y="${53.8 + i * 11.2}" width="3" height="2.800" rx=".8" fill="none" stroke="#d1506a" stroke-width=".6"/>`).join('')}</g>
  <rect width="288" height="17.400" fill="#fff"/><rect width="288" height="8" fill="#d0ddff"/><rect x="54" y="1.200" width="11.200" height="7" rx="1.500" fill="#fff"/>${tabs}
  <rect x="281" y="1.500" width="5.600" height="5.600" rx="1.500" fill="#e8effe"/>
  <rect x="24" y="9.200" width="193" height="6.800" rx="3.400" fill="#e9ecf6"/>
  <text x="31.500" y="13.600" fill="#333">localhost:3000/#/manage-admins/roles/edit</text>
  <g fill="none" stroke="#444" stroke-width=".5"><path d="M3.200 12.600h2.500M4.400 11.400l-1.200 1.200 1.200 1.200"/><circle cx="18.800" cy="12.600" r="1.100"/><circle cx="27.400" cy="12.600" r="1.200"/><circle cx="212.500" cy="12.600" r="1.100"/><rect x="250" y="11.200" width="2.600" height="2.800"/><path d="M261 11.500h3M261 12.700h2M264 11.500v2.500M283.600 11v3.500"/><rect x="268" y="11.200" width="2.800" height="2.800"/></g>
  <rect x="221.500" y="11" width="2" height="3.200" fill="#ff5a2b"/><circle cx="229.600" cy="12.600" r="1.500" fill="#d0c"/><rect x="236" y="11" width="2.500" height="3.200" fill="#5c9bff"/><rect x="242.500" y="11.500" width="3.200" height="2.300" fill="#c08a10"/><circle cx="276.400" cy="12.600" r="2" fill="#187f6f"/>
  <path d="M0 17.400H288" stroke="#ddd" stroke-width=".3"/>
  <rect x="255.500" y="158.500" width="30" height="18.500" rx=".5" fill="#fff" stroke="#333" stroke-width="1"/><path d="M258 162h1M275 161h4M275 163h4M272 166h3M277 170h3M269 174h8" stroke="#8fa8ee" stroke-width=".7"/>
</svg>`;
});
</script>
</body>
</html>
